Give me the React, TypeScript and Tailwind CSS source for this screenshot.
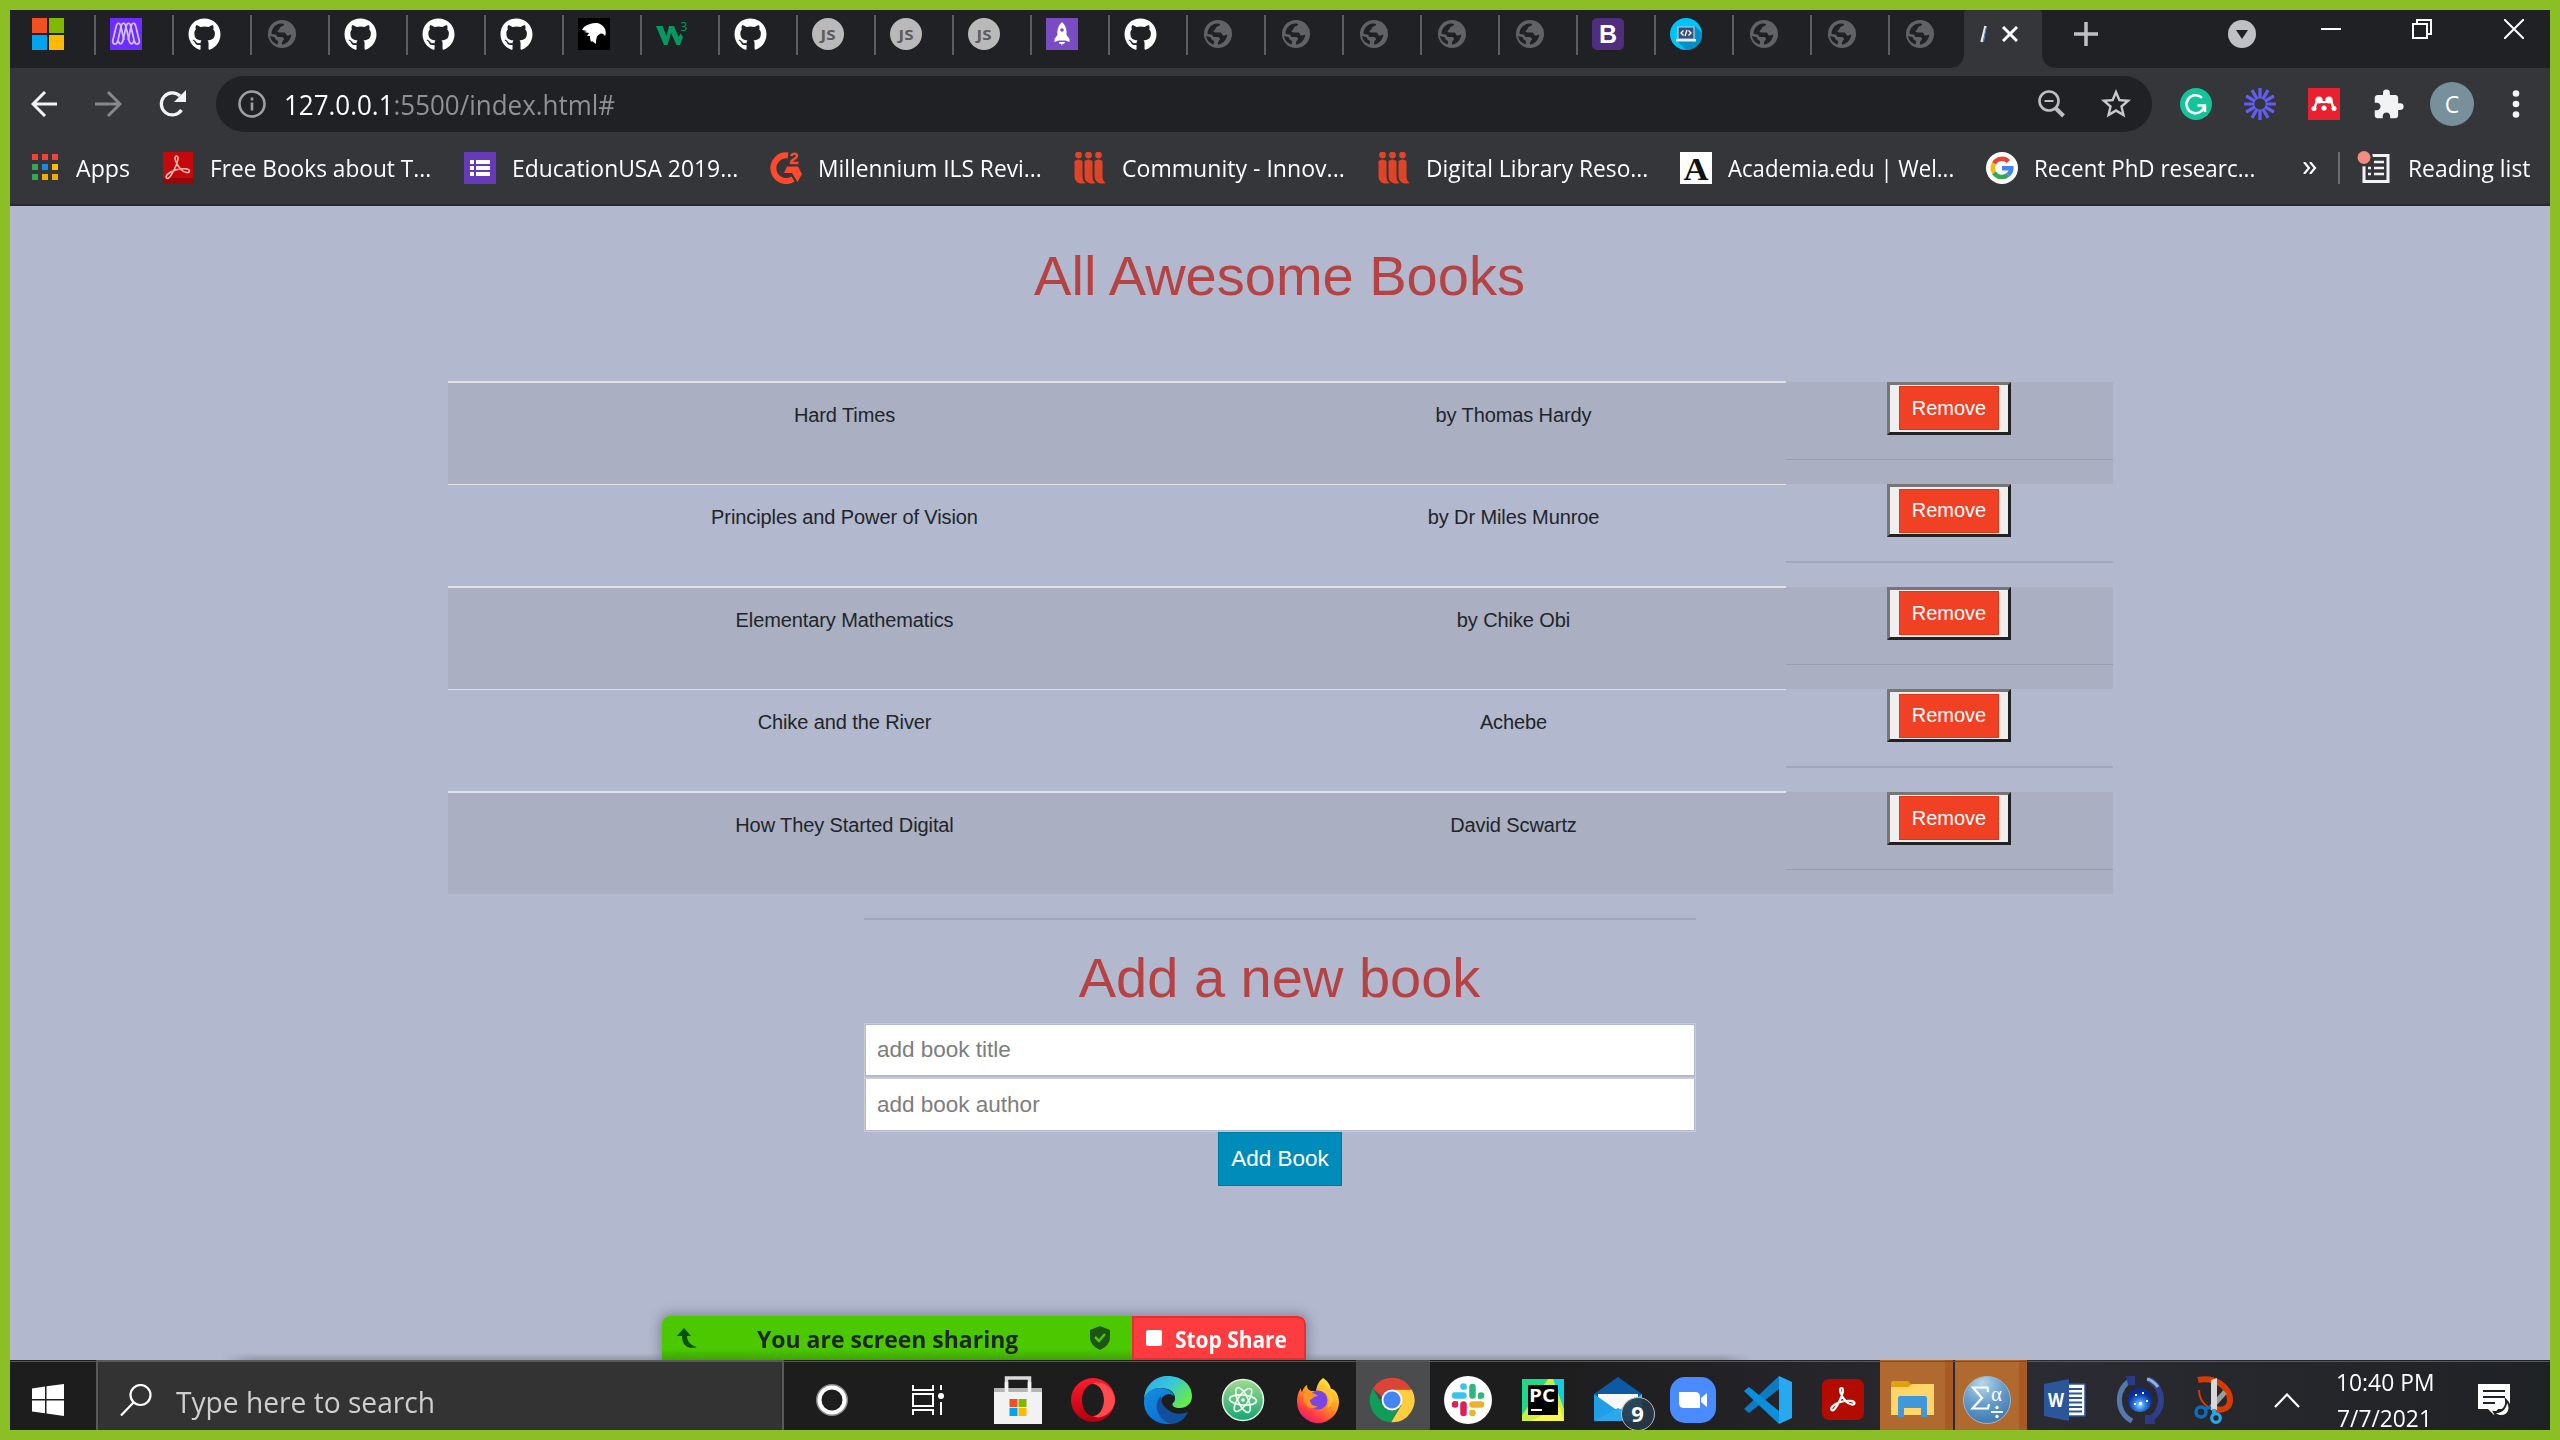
import React, { useLayoutEffect, useRef, useState } from "react";
import { FaGithub } from "react-icons/fa";
import { MdExtension, MdStarBorder } from "react-icons/md";

type Kids = { children?: React.ReactNode };

/* Single-line label condensed or widened to an exact width. */
function Fit({ w, className = "", children }: Kids & { w: number; className?: string }) {
  const ref = useRef<HTMLSpanElement>(null);
  const [scale, setScale] = useState(1);
  useLayoutEffect(() => {
    if (ref.current) setScale(w / ref.current.offsetWidth);
  }, [w]);
  return (
    <span className={"block shrink-0 whitespace-nowrap " + className} style={{ width: w }}>
      <span ref={ref} className="inline-block origin-left" style={{ transform: `scaleX(${scale})` }}>
        {children}
      </span>
    </span>
  );
}

function Svg({ size = 32, box = "0 0 32 32", children }: Kids & { size?: number; box?: string }) {
  return (
    <svg width={size} height={size} viewBox={box} fill="none" className="block shrink-0">
      {children}
    </svg>
  );
}

const Microsoft = () => (
  <Svg>
    <path fill="#f25022" d="M0 0h15v15H0z" />
    <path fill="#7fba00" d="M17 0h15v15H17z" />
    <path fill="#00a4ef" d="M0 17h15v15H0z" />
    <path fill="#ffb900" d="M17 17h15v15H17z" />
  </Svg>
);
const Microverse = () => (
  <Svg>
    <path fill="#6f2cff" d="M0 0h32v32H0z" />
    <g stroke="#d3c2ff" strokeWidth="1.700">
      <path d="M2.500 24C4 27 7 27 8 22l3-13c1-5 4-5 5 0l3 13c1 5 4 5 5 0" />
      <path d="M29.500 24C28 27 25 27 24 22L21 9c-1-5-4-5-5 0l-3 13c-1 5-4 5-5 0" />
      <path d="M2.500 24L6 9c1-5 4-5 5 0l3 13M29.500 24L26 9c-1-5-4-5-5 0l-3 13" />
    </g>
  </Svg>
);
const GitHub = () => <FaGithub size={33} color="#fff" className="shrink-0" />;
const Globe = () => (
  <Svg>
    <circle cx="16" cy="16" r="14" fill="#5f6368" />
    <path
      fill="#202124"
      d="M15 5.500c2.600 0 3.500.5 3 1.500-.5 1-2.500 1-3.500 2s-.5 2-2 3-1 2.500 1 2.500h4.500c2 0 1.500 2.500 3 3 2 .5 3-1 4.500-1-1 5-4 9.500-9.500 10 0-2 0-3.500 1.500-4.500 1.500-1 0-3-2-3h-3.500c-1.500 0-1-2-2.500-2.500L5.500 16c0-6 4-10 9.500-10.500zM4 18l4 1c1.500.5 1 2.500 2.500 3 1 .5 2 1 1.500 3l-.5 1.500C7.500 25 4.500 22 4 18z"
    />
  </Svg>
);
const Eagle = () => (
  <Svg>
    <path fill="#000" d="M0 0h32v32H0z" />
    <path fill="#fff" d="M4 12c2-4 5-5 8-6 6-2 12-1 15 5 1 3 1 5 0 7-1-2-3-3-5-2-3 1-4 4-4 10l-4-3-1 1c-1-3-1-4-1-6l-3 0 2-3-5-1 3-1z" />
  </Svg>
);
const W3 = () => (
  <Svg>
    <path fill="#059862" d="M0 8h6.500l4 10 2.500-10h5l4.500 11 2-3.500L27 19l-3 8h-3.500L15 15l-3.500 12H8z" />
    <text x="24.500" y="13" fontSize="12" fill="#059862" fontFamily="Open Sans, sans-serif">3</text>
  </Svg>
);
const Js = () => (
  <Svg>
    <circle cx="16" cy="16" r="16" fill="#b9b9b9" />
    <text x="16" y="21.500" fontSize="15" fontWeight="700" fill="#5c5c5c" textAnchor="middle" fontFamily="Open Sans, sans-serif" textLength="15" lengthAdjust="spacingAndGlyphs">JS</text>
  </Svg>
);
const Rocket = () => (
  <Svg>
    <path fill="#7b4bc4" d="M0 0h32v32H0z" />
    <path fill="#fff" d="M16 4c4 4 5 8 4.500 13l3 4v3l-4-1.500h-7L8.500 24v-3l3-4C11 12 12 8 16 4zM13 24h6l-1 2-1.500-.5L16 28l-1-2.500-1.500.5z" />
    <circle cx="16" cy="12" r="1.800" fill="#7b4bc4" />
  </Svg>
);
const Bootstrap = () => (
  <Svg>
    <rect width="32" height="32" rx="5" fill="#4f2f7d" />
    <text x="16" y="25" fontSize="25" fontWeight="700" fill="#fff" textAnchor="middle" fontFamily="Liberation Sans, sans-serif">B</text>
  </Svg>
);
const CodeLaptop = () => (
  <Svg>
    <circle cx="16" cy="16" r="16" fill="#00c3f7" />
    <path fill="#0390c8" d="M25 8l7 7c1 9-6 17-16 17l-9-9z" />
    <path fill="#35507a" stroke="#b9cfe0" strokeWidth="1.200" d="M8 9h16v12H8z" />
    <path fill="#e6eef5" d="M6 21h20v2.500H6z" />
    <path stroke="#fff" strokeWidth="1.300" d="M13.500 12.500L11 15l2.500 2.500M18.500 12.500L21 15l-2.500 2.500M17 12l-2 6" />
  </Svg>
);

const tabs = [
  Microsoft, Microverse, GitHub, Globe, GitHub, GitHub, GitHub, Eagle, W3, GitHub, Js, Js, Js, Rocket, GitHub,
  Globe, Globe, Globe, Globe, Globe, Bootstrap, CodeLaptop, Globe, Globe, Globe,
];

function TabStrip() {
  return (
    <div className="flex h-[58px] shrink-0 bg-[#202124] pl-[22px]">
      {tabs.map((Icon, i) => (
        <div key={i} className={i === tabs.length - 1 ? "flex w-[60px] shrink-0 pt-2" : "flex w-[78px] shrink-0 pt-2"}>
          <div className="w-[62px]"><Icon /></div>
          {i < tabs.length - 1 && <div className="-mt-[3px] h-10 w-[2px] bg-[#5b5d61]" />}
        </div>
      ))}
      <div className="relative flex w-[78px] shrink-0 items-center rounded-t-sm bg-[#35363a] pb-[10px] pl-4">
        <svg className="absolute bottom-0 -left-4" width="16" height="16"><path fill="#35363a" d="M16 0v16H0Q16 16 16 0z" /></svg>
        <svg className="absolute -right-4 bottom-0" width="16" height="16"><path fill="#35363a" d="M0 0v16h16Q0 16 0 0z" /></svg>
        <svg width="8" height="18" className="mr-[14px]"><path d="M1.500 17L5.500 1" stroke="#e8eaed" strokeWidth="2.500" /><path d="M3.500 17L6 3" stroke="#4f83c9" strokeWidth="1.200" /></svg>
        <svg width="16" height="16"><path d="M1 1l14 14M15 1L1 15" stroke="#fff" strokeWidth="3" /></svg>
      </div>
      <svg width="24" height="24" className="mt-3 ml-8 shrink-0"><path d="M12 0v24M0 12h24" stroke="#bdc0c5" strokeWidth="3.500" /></svg>
      <svg width="28" height="28" className="mt-[10px] ml-[130px] shrink-0"><circle cx="14" cy="14" r="14" fill="#bdc1c6" /><path d="M8 10h12l-6 9z" fill="#202124" /></svg>
      <svg width="20" height="20" className="mt-[9px] ml-[65px] shrink-0"><path d="M0 10h20" stroke="#fff" strokeWidth="2" /></svg>
      <svg width="20" height="20" className="mt-[9px] ml-[71px] shrink-0" fill="none" stroke="#fff" strokeWidth="2"><path d="M1 5h14v14H1zM5 5V1h14v14h-4" /></svg>
      <svg width="20" height="20" className="mt-[9px] ml-[72px] shrink-0"><path d="M0 0l20 20M20 0L0 20" stroke="#fff" strokeWidth="2" /></svg>
    </div>
  );
}

function Toolbar() {
  return (
    <div className="flex h-[72px] shrink-0 items-center bg-[#35363a] pl-[21px]">
      <svg width="27" height="26" fill="none" stroke="#f1f3f4" strokeWidth="3"><path d="M26 13H2M14 1L2 13l12 12" /></svg>
      <svg width="27" height="26" fill="none" stroke="#85878b" strokeWidth="3" className="ml-[37px]"><path d="M0 13h25M13 1l12 12-12 12" /></svg>
      <svg width="28" height="28" fill="none" className="ml-[36px]"><path d="M23.500 20A11 11 0 1 1 22 6" stroke="#f1f3f4" strokeWidth="3.200" /><path d="M28 0v12H16z" fill="#f1f3f4" /></svg>
      <div className="ml-[30px] flex h-14 w-[1936px] shrink-0 items-center rounded-full bg-[#202124] pl-[22px]">
        <svg width="28" height="28" fill="none" stroke="#9aa0a6" strokeWidth="2.600"><circle cx="14" cy="14" r="12.500" /><path d="M14 12.500v8M14 7.500v3" /></svg>
        <Fit w={331} className="mr-[2px] ml-[18px] text-[28px] text-[#8e9195]"><span className="text-white">127.0.0.1</span>:5500/index.html#</Fit>
        <div className="grow" />
        <svg width="28" height="28" fill="none" stroke="#bdbdbd" strokeWidth="2.600"><circle cx="12" cy="11" r="9.500" /><path d="M18.500 18l8 8" strokeWidth="4" /><path d="M7.500 11h9" strokeWidth="2" /></svg>
        <MdStarBorder size={36} color="#c7c8ca" className="mr-[18px] ml-[33px]" />
      </div>
      <div className="ml-7 flex items-center gap-8">
        <Svg>
          <circle cx="16" cy="16" r="16" fill="#15c39a" />
          <path d="M22 10a9 9 0 1 0 2.500 7M17.500 17.500H25V24" stroke="#fff" strokeWidth="2.500" />
        </Svg>
        <Svg>
          <g stroke="#625df5" strokeWidth="3.200">
            {[0, 30, 60, 90, 120, 150].map((a) => <path key={a} d="M16 0v10.500M16 21.500V32" transform={`rotate(${a} 16 16)`} />)}
          </g>
        </Svg>
        <Svg>
          <path fill="#e9202f" d="M0 0h32v32H0z" />
          <g fill="#fff"><circle cx="11" cy="12" r="3.600" /><circle cx="21" cy="12" r="3.600" /><circle cx="6" cy="20.500" r="2.500" /><circle cx="16" cy="20" r="2.600" /><circle cx="26" cy="20.500" r="2.500" /></g>
          <path d="M9 12c-1 3-1 6-3 8M12 13c2 1.500 6 1.500 8 0M23 12c1 3 1 6 3 8" stroke="#fff" strokeWidth="2.400" />
        </Svg>
        <MdExtension size={33} color="#f1f3f4" />
      </div>
      <div className="ml-[25px] flex size-11 shrink-0 items-center justify-center rounded-full bg-[#78909c] text-[23px] text-white">C</div>
      <svg width="8" height="28" className="ml-[38px]" fill="#f1f3f4"><circle cx="4" cy="3.500" r="3.300" /><circle cx="4" cy="14" r="3.300" /><circle cx="4" cy="24.500" r="3.300" /></svg>
    </div>
  );
}

const AppsGrid = () => (
  <svg width="28" height="28" className="shrink-0">
    {["#f44336", "#f44336", "#f44336", "#34a853", "#1e88e5", "#fbbc05", "#34a853", "#f5a80c", "#f5a80c"].map((c, i) => (
      <rect key={i} x={(i % 3) * 10} y={Math.floor(i / 3) * 10} width="6" height="6" fill={c} />
    ))}
  </svg>
);
const PdfMark = () => (
  <path d="M14.500 4C11 4 14 12 19 17.500c3.500 3.500 8.500 4 8.500 1.500s-7-3-14-1C7 20 3 23.500 4.500 26c2 2 5-3 8-9 3-6 5-13 2-13z" />
);
const AcrobatOld = () => (
  <Svg>
    <path fill="#c4090c" d="M1 0h30v32H1z" /><path fill="#7c0708" d="M1 26h30v6H1z" opacity=".6" />
    <g stroke="#f0b9b4" strokeWidth="1.600"><PdfMark /></g>
  </Svg>
);
const Forms = () => (
  <Svg>
    <rect width="32" height="32" rx="1" fill="#673ab7" />
    <path fill="#fff" d="M6 8h4v4H6zM12 8h14v4H12zM6 14h4v4H6zM12 14h14v4H12zM6 20h4v4H6zM12 20h14v4H12z" />
  </Svg>
);
const G2 = () => (
  <Svg>
    <path stroke="#ff492c" strokeWidth="6" d="M18 3.500A12.800 12.800 0 1 0 23 27" />
    <path fill="#ff492c" d="M17 14.500h11l4 7.500-4.500 8-5.500-9h-8z" />
    <path stroke="#ff492c" strokeWidth="2.500" d="M21 4c1.500-3 6-3 6 0s-6 3-6 7h7.500" />
  </Svg>
);
const Triple = () => (
  <Svg>
    {[0, 10, 20].map((x) => (
      <g key={x} transform={`translate(${x} 0)`} fill="#e04426">
        <circle cx="4.500" cy="3" r="3.400" />
        <path d="M.5 9Q4.500 6 8.500 9v15q0 5 3 7c-6 2-11-1-11-7z" />
      </g>
    ))}
  </Svg>
);
const Academia = () => (
  <Svg>
    <path fill="#fff" d="M0 0h32v32H0z" />
    <text x="16" y="28" fontSize="32" fontWeight="700" fill="#111" textAnchor="middle" fontFamily="Liberation Serif, serif" textLength="25" lengthAdjust="spacingAndGlyphs">A</text>
  </Svg>
);
const Google = () => (
  <Svg>
    <circle cx="16" cy="16" r="16" fill="#fff" />
    <g strokeWidth="4.500">
      <path stroke="#ea4335" d="M22.500 9.500A9.300 9.300 0 0 0 8 11.300" />
      <path stroke="#fbbc05" d="M8 11.300a9.300 9.300 0 0 0 0 9.400" />
      <path stroke="#34a853" d="M8 20.700a9.300 9.300 0 0 0 14 2" />
      <path stroke="#4285f4" d="M22 22.700c2.500-2 3.300-4 3.300-6.500H16" />
    </g>
  </Svg>
);

function Bookmark({ icon, text, w, cell }: { icon: React.ReactNode; text: string; w: number; cell: string }) {
  return (
    <div className={"flex shrink-0 items-center gap-4 " + cell}>
      {icon}
      <Fit w={w}>{text}</Fit>
    </div>
  );
}

function Bookmarks() {
  return (
    <div className="flex h-[66px] shrink-0 items-center border-b-2 border-[#28292b] bg-[#35363a] pb-2 pl-[22px] text-2xl text-white">
      <Bookmark icon={<AppsGrid />} text="Apps" w={54} cell="w-[130px]" />
      <Bookmark icon={<AcrobatOld />} text="Free Books about T..." w={221} cell="w-[302px]" />
      <Bookmark icon={<Forms />} text="EducationUSA 2019..." w={226} cell="w-[306px]" />
      <Bookmark icon={<G2 />} text="Millennium ILS Revi..." w={224} cell="w-[304px]" />
      <Bookmark icon={<Triple />} text="Community - Innov..." w={223} cell="w-[304px]" />
      <Bookmark icon={<Triple />} text="Digital Library Reso..." w={222} cell="w-[302px]" />
      <Bookmark icon={<Academia />} text="Academia.edu | Wel..." w={226} cell="w-[306px]" />
      <Bookmark icon={<Google />} text="Recent PhD researc..." w={221} cell="w-[317px]" />
      <svg width="14" height="12" className="shrink-0" fill="none" stroke="#fff" strokeWidth="2.200"><path d="M1 0l5 6-5 6M7 0l5 6-5 6" /></svg>
      <div className="ml-[21px] h-8 w-[2px] shrink-0 bg-[#6b6c70]" />
      <svg width="34" height="34" className="ml-[17px] shrink-0" fill="none">
        <path d="M7 4.500h24v26H7z" stroke="#f1f3f4" strokeWidth="3" />
        <path d="M11 11h3M11 17h3M11 23h3M17 11h10M17 17h10M17 23h10" stroke="#f1f3f4" strokeWidth="2.600" />
        <circle cx="7" cy="6.500" r="9" fill="#35363a" /><circle cx="7" cy="6.500" r="6.500" fill="#f28b82" />
      </svg>
      <Fit w={122} className="ml-[17px]">Reading list</Fit>
    </div>
  );
}

const books = [
  ["Hard Times", "by Thomas Hardy"],
  ["Principles and Power of Vision", "by Dr Miles Munroe"],
  ["Elementary Mathematics", "by Chike Obi"],
  ["Chike and the River", "Achebe"],
  ["How They Started Digital", "David Scwartz"],
];

function BookRow({ book, striped }: { book: string[]; striped: boolean }) {
  const cell = striped ? "-mt-px border-t-2 border-[#dee2e6] pt-[17px]" : "border-t border-[#dee2e6] pt-[17px]";
  return (
    <div className={striped ? "flex h-[102px] bg-[#aaafc1]" : "flex h-[103px]"}>
      <div className={"w-[793px] pl-px text-center leading-[30px] tracking-[-0.1px] " + cell}>{book[0]}</div>
      <div className={"w-[545px] pl-px text-center leading-[30px] tracking-[-0.1px] " + cell}>{book[1]}</div>
      <div className="flex w-[327px] flex-col items-center">
        <button className={"flex h-[53px] w-[124px] justify-center border-[3px] border-t-[#767676] border-r-[#222] border-b-[#222] border-l-[#767676] bg-[#efefef] " + (striped ? "pt-px" : "pt-[2px]")}>
          <span className={"block h-11 w-[100px] border border-[#ea3212] bg-[#f04124] text-white " + (striped ? "leading-[42px]" : "leading-[40px]")}>Remove</span>
        </button>
        <div className={striped ? "mt-6 h-px w-full bg-[#989db0]" : "mt-6 h-[2px] w-full bg-[#a2a7bb]"} />
      </div>
    </div>
  );
}

function Page() {
  return (
    <div className="flex h-[1154px] shrink-0 flex-col items-center bg-[#b2b8cd] pt-[38px] font-['Liberation_Sans',Arial,sans-serif] text-xl text-[#212529]">
      <h1 className="-ml-px text-[56px] leading-[64px] text-[#b64343]">All Awesome Books</h1>
      <div className="mt-[74px] w-[1665px]">
        {books.map((b, i) => <BookRow key={b[0]} book={b} striped={i % 2 === 0} />)}
      </div>
      <div className="mt-6 h-[2px] w-[832px] bg-[#a2a7bb]" />
      <h2 className="-ml-px mt-[26px] text-[56px] leading-[64px] text-[#b64343]">Add a new book</h2>
      <div className="mt-[13px] flex h-[54px] w-[832px] border border-b-0 border-[#ccc] px-px pt-px pb-[2px]">
        <input placeholder="add book title" className="w-full bg-white px-[11px] text-[22.5px] placeholder:text-[#7d7d7d]" />
      </div>
      <div className="flex h-[55px] w-[832px] border border-t-2 border-[#ccc] px-px pb-px">
        <input placeholder="add book author" className="w-full bg-white px-[11px] text-[22.5px] placeholder:text-[#7d7d7d]" />
      </div>
      <button className="h-[54px] w-[124px] border border-[#0079a1] bg-[#008cba] text-[22.5px] whitespace-nowrap text-white">Add Book</button>
    </div>
  );
}

function ShareBar() {
  return (
    <div className="absolute top-[1306px] left-[652px] flex h-11 w-[644px] overflow-hidden rounded-t-lg font-bold shadow-[0_0_12px_2px_rgba(50,55,75,0.4)] [clip-path:inset(-20px_-20px_0_-20px)]">
      <div className="flex w-[470px] items-center bg-linear-to-b from-[#4bc800] from-75% to-[#3da400] pl-[15px]">
        <svg width="20" height="20"><path fill="#0a5200" d="M7 0l7 8h-4c0 5 3 9 10 11-9 3-15-2-15-11H0z" /></svg>
        <Fit w={261} className="ml-[60px] pt-[3px] text-[23.500px] text-[#21262d]">You are screen sharing</Fit>
        <svg width="22" height="24" className="ml-[71px]"><path fill="#1d5514" d="M11 0l10 4v7c0 6-4 10-10 13C5 21 1 17 1 11V4z" /><path d="M6 11l4 4 6-7" fill="none" stroke="#4bc800" strokeWidth="2.500" /></svg>
      </div>
      <div className="flex grow items-center rounded-tr-lg border-2 border-[#e52f33] bg-[#fc3c3f] pl-3 text-white">
        <div className="size-4 rounded-[2px] bg-white" />
        <Fit w={112} className="ml-[13px] pt-[3px] text-[23.500px]">Stop Share</Fit>
      </div>
    </div>
  );
}

const Store = () => (
  <Svg size={48} box="0 0 48 48">
    <path d="M12.500 16V2h23v14" stroke="#dcdcdc" strokeWidth="3.500" />
    <path fill="#b5b5b5" d="M0 12h48v5H0z" /><path fill="#f2f2f2" d="M0 16h48v32H0z" /><path stroke="#f2f2f2" strokeWidth="3.500" d="M12.500 16V6M35.500 16V6" />
    <path fill="#f25022" d="M15.500 23h8v8h-8z" /><path fill="#7fba00" d="M24.500 23h8v8h-8z" /><path fill="#00a4ef" d="M15.500 32h8v8h-8z" /><path fill="#ffb900" d="M24.500 32h8v8h-8z" />
  </Svg>
);
const Opera = () => (
  <Svg size={48} box="0 0 48 48">
    <defs><linearGradient id="op" x1="0" y1="0" x2="0" y2="1"><stop stopColor="#ff1b2d" /><stop offset="1" stopColor="#b3000f" /></linearGradient></defs>
    <path fill="url(#op)" fillRule="evenodd" d="M24 2a22 22 0 1 0 0 44 22 22 0 1 0 0-44zm0 6c6 0 11 7 11 16s-5 16-11 16-11-7-11-16 5-16 11-16z" />
    <path fill="#ff4b4f" d="M24 8C32 3 46 12 46 24S32 45 24 40c6 0 11-7 11-16S30 8 24 8z" />
  </Svg>
);
const Edge = () => (
  <Svg size={48} box="0 0 48 48">
    <defs>
      <linearGradient id="e1" x1="0" y1="0" x2="1" y2=".6"><stop stopColor="#2fa8ea" /><stop offset=".5" stopColor="#35c5dc" /><stop offset="1" stopColor="#66eb4a" /></linearGradient>
      <linearGradient id="e2" x1="0" y1="0" x2=".6" y2="1"><stop stopColor="#1490df" /><stop offset="1" stopColor="#0b6fd0" /></linearGradient>
    </defs>
    <path fill="url(#e1)" d="M0 23C1 8 12 0 24 0c14 0 24 9 24 20 0 8-6 12-12 12-5 0-9-2-7-5 2-2 2-3 2-5 0-6-6-10-14-10C9 12 3 16 0 23z" />
    <path fill="url(#e2)" d="M0 24c2-8 8-12 15-12 8 0 14 3 15 8-4-3-10-2-12 2-5 9 0 20 10 26-2 0-3 0-4 0C10 48-1 38 0 24z" />
    <path fill="#124f9c" d="M17 20c-9 8-3 24 10 28 8 0 14-5 17-12-7 3-16 2-21-3-4-3-6-7-6-13z" />
  </Svg>
);
const Atom = () => (
  <Svg size={44} box="0 0 44 44">
    <defs><linearGradient id="at" x1="0" y1="0" x2="0" y2="1"><stop stopColor="#9fdb8d" /><stop offset="1" stopColor="#17a573" /></linearGradient></defs>
    <circle cx="22" cy="22" r="20.500" fill="url(#at)" stroke="#dff3e4" strokeWidth="1.500" />
    <g stroke="#f3fff3" strokeWidth="1.600">{[5, 65, 125].map((a) => <ellipse key={a} cx="22" cy="22" rx="13.500" ry="5" transform={`rotate(${a} 22 22)`} />)}</g>
    <circle cx="22" cy="22" r="1.800" fill="#fff" />
  </Svg>
);
const Firefox = () => (
  <Svg size={46} box="0 0 46 46">
    <defs>
      <linearGradient id="ff" x1=".8" y1="0" x2=".2" y2="1"><stop stopColor="#fff04a" /><stop offset=".45" stopColor="#ff9a1e" /><stop offset=".8" stopColor="#ff3647" /><stop offset="1" stopColor="#e31587" /></linearGradient>
    </defs>
    <path fill="url(#ff)" d="M28 1c5 3 7 7 8 11 3-1 8 5 8 13a21 21 0 0 1-42 0c0-7 2-11 4-14 0 2 0 3 1 4 1-3 3-6 5-7 0 3 1 5 4 6l5 0c1-6 3-10 7-13z" />
    <circle cx="23" cy="23" r="9.500" fill="#7a45e5" />
    <path fill="#ff9520" d="M8 18c5-3 10-3 15 1-5 0-5 3-8 4 0 4 4 7 8 6-6 5-15 1-15-11z" />
    <path fill="#ffc233" d="M23 13c7 0 11 5 11 11 0 3-1 5-2 7 9-5 8-18-5-20z" />
  </Svg>
);
const Chrome = () => (
  <Svg size={48} box="0 0 48 48">
    <path fill="#ffcd40" d="M24 13.500h19.800A22.300 22.300 0 0 1 23 46.300L33.500 29z" />
    <path fill="#db4437" d="M4.900 12.500a22.300 22.300 0 0 1 38.700 1H24a10.500 10.500 0 0 0-10 7z" />
    <path fill="#0f9d58" d="M4.900 12.500L14.900 29.500A10.500 10.500 0 0 0 31 32l-8 14.300A22.300 22.300 0 0 1 4.900 12.500z" />
    <circle cx="24" cy="24" r="10.500" fill="#f4f4f4" /><circle cx="24" cy="24" r="8.500" fill="#4285f4" />
  </Svg>
);
const Slack = () => (
  <Svg size={48} box="0 0 48 48">
    <circle cx="24" cy="24" r="24" fill="#fff" />
    <g strokeWidth="6.500" strokeLinecap="round">
      <path stroke="#36c5f0" d="M11 19.500h8.500M19.500 10.500v.1" /><path stroke="#2eb67d" d="M28.500 11v8.500M37 19.500h.1" />
      <path stroke="#ecb22e" d="M28.500 28.500H37M28.500 37v.1" /><path stroke="#e01e5a" d="M19.500 28.500V37M11 28.500h.1" />
    </g>
    <path fill="#36c5f0" d="M18 7.500v6h4.700v-3z" opacity=".9" /><path fill="#2eb67d" d="M34 18v4.700h3l2-3z" opacity=".9" />
    <path fill="#ecb22e" d="M25.300 34H30l1 3-3 2.500z" opacity=".9" /><path fill="#e01e5a" d="M9 25.300h5V29l-3 2z" opacity=".9" />
  </Svg>
);
const PyCharm = () => (
  <Svg size={42} box="0 0 42 42">
    <path fill="#21d789" d="M0 0h42v42H0z" /><path fill="#c9ef3f" d="M26 0h9l7 30v12H0V36z" /><path fill="#12cfe0" d="M31 0h11v30z" /><path fill="#f6f84e" d="M8 42l30-14 4 14z" />
    <path fill="#000" d="M6 6h30v30H6z" />
    <text x="7" y="22.500" fontSize="18" fontWeight="700" fill="#fff" fontFamily="Open Sans, sans-serif" textLength="26" lengthAdjust="spacingAndGlyphs">PC</text>
    <path fill="#fff" d="M9 30h11v2H9z" />
  </Svg>
);
const Mail = () => (
  <div className="relative">
    <Svg size={48} box="0 0 48 48">
      <path fill="#0c59a4" d="M0 18L24 1l24 17v2H0z" /><path fill="#f7f7f7" d="M4 18h40v8L24 38 4 26z" /><path fill="#1f9fe6" d="M0 18l24 17L0 45z" /><path fill="#2ba9ec" d="M0 45l24-13 24 13z" /><path fill="#31b9ef" d="M48 18L24 35l24 10z" />
    </Svg>
    <div className="absolute top-[21px] left-[27px] flex size-[34px] items-center justify-center rounded-full border border-[#b9bcc0] bg-[#263a48]/90 pb-px text-[22px] font-bold text-white">9</div>
  </div>
);
const Zoom = () => (
  <Svg size={46} box="0 0 46 46">
    <rect width="46" height="46" rx="15" fill="#4a8cff" /><path fill="#fff" d="M9 15h16q5 0 5 5v11H14q-5 0-5-5zM31 21l6-5v14l-6-5z" />
  </Svg>
);
const VsCode = () => (
  <Svg size={48} box="0 0 48 48">
    <path fill="#0e7ac4" d="M0 33l5 4L35 13V0z" /><path fill="#0b8fdc" d="M0 15l5-4 30 24v13z" /><path fill="#27a9f1" d="M35 0l13 6v36l-13 6z" />
  </Svg>
);
const Acrobat = () => (
  <Svg size={42} box="0 0 42 42">
    <rect width="42" height="41" rx="7" fill="#b30b00" />
    <g transform="translate(5 5)" stroke="#fff" strokeWidth="2.200"><PdfMark /></g>
  </Svg>
);
const Explorer = () => (
  <Svg size={44} box="0 0 44 44">
    <path fill="#e0a10c" d="M1 5q0-2 2-2h15l4 4v6H1z" /><path fill="#ffd667" d="M1 9h17l4-3h22v31H1z" /><path fill="#3f97dc" d="M8 20q0-2 2-2h25q2 0 2 2v19h-6v-9H14v9H8z" />
  </Svg>
);
const Sigma = () => (
  <Svg size={48} box="0 0 48 48">
    <defs><radialGradient id="sg" cx=".4" cy=".15" r=".9"><stop stopColor="#b9d7ea" /><stop offset=".5" stopColor="#659dcb" /><stop offset="1" stopColor="#3d76af" /></radialGradient></defs>
    <circle cx="24" cy="24" r="23.500" fill="url(#sg)" stroke="#9db9cc" />
    <path stroke="#fff" strokeWidth="2.200" d="M25 16l-.5-4.500H10l9 10.500-9.500 10.500H25l1-4.500" />
    <text x="28" y="25" fontSize="21" fill="#fff" fontFamily="Liberation Serif, serif">α</text>
    <path stroke="#fff" strokeWidth="1.800" d="M28 36h12" /><circle cx="34" cy="31.500" r="1.700" fill="#fff" /><circle cx="34" cy="40.500" r="1.700" fill="#fff" />
  </Svg>
);
const Word = () => (
  <Svg size={42} box="0 0 42 42">
    <path fill="#fff" stroke="#2b579a" strokeWidth="1.500" d="M22 5h19v32H22z" /><path stroke="#2b579a" strokeWidth="2" d="M25 10h13M25 14.500h13M25 19h13M25 23.500h13M25 28h13M25 32.500h13" /><path fill="#2b579a" d="M0 5l25-5v42L0 37z" />
    <text x="12" y="28" fontSize="20" fontWeight="700" fill="#fff" textAnchor="middle" fontFamily="Open Sans, sans-serif" textLength="16" lengthAdjust="spacingAndGlyphs">W</text>
  </Svg>
);
const Orbit = () => (
  <Svg size={48} box="0 0 48 48">
    <defs><radialGradient id="ob" cx=".5" cy=".7"><stop stopColor="#8fe0ff" /><stop offset=".5" stopColor="#2b78e0" /><stop offset="1" stopColor="#0a2d9c" /></radialGradient></defs>
    <path stroke="#5679ac" strokeWidth="5" d="M17 4C0 9-2 36 16 45" /><path stroke="#2f3f8d" strokeWidth="6" d="M31 44C49 38 50 12 32 3" />
    <path stroke="#8fb0d8" strokeWidth="3" d="M31 3c5 1 8 4 11 8" /><path fill="#2c3a86" d="M10 0h9v9l-7 0zM29 39h9l1 9h-10z" />
    <circle cx="24" cy="24" r="12" fill="url(#ob)" /><path fill="#eefaff" d="M19 18h2v2h-2zM26 16h2v2h-2zM23 26h3v3h-3zM30 24h2v2h-2zM18 27h2v2h-2z" />
  </Svg>
);
const Snip = () => (
  <Svg size={48} box="0 0 48 48">
    <path stroke="#d83b01" strokeWidth="6" d="M7 4c18-4 32 8 32 20 0 8-7 11-14 9" /><path stroke="#d83b01" strokeWidth="2" d="M8 14c0 8 3 13 9 17" />
    <path stroke="#9b9b9b" strokeWidth="5" d="M34 16L19 33" /><path fill="#d8d8d8" d="M20 4l6-2v32h-6z" />
    <circle cx="10" cy="36" r="5" stroke="#0f6cbd" strokeWidth="3.500" /><circle cx="25" cy="42" r="4.300" stroke="#28a8ea" strokeWidth="3.200" /><path stroke="#0f6cbd" strokeWidth="3" d="M14 33l6-2" /><path stroke="#28a8ea" strokeWidth="4" d="M23 37v-4" />
  </Svg>
);

function Slot({ children, tone = "" }: Kids & { tone?: string }) {
  return <div className={"flex w-[75px] shrink-0 items-center justify-center pt-[10px] " + tone}>{children}</div>;
}

function Taskbar() {
  return (
    <div className="relative flex h-[70px] shrink-0 bg-linear-to-r from-[#1d1d1e] from-60% via-[#2b2b33] via-80% to-[#1f2224]">
      <div className="absolute -top-[7px] left-[212px] h-[7px] w-[1530px] bg-linear-to-b from-transparent to-[#9398ab] mask-x-from-98% mask-x-to-100%" />
      <div className="absolute top-px left-0 h-px w-full bg-[#57585a]" />
      <div className="flex w-[86px] items-center pt-[10px] pl-[22px]">
        <svg width="32" height="32" fill="#fff"><path d="M0 4.500l13-2V15H0zM14.500 2.300L32 0v15H14.500zM0 16.500h13v12.800L0 27.500zM14.500 16.500H32V32l-17.500-2.500z" /></svg>
      </div>
      <div className="flex w-[688px] items-center border-x-2 border-t-2 border-[#58595a] bg-[#333] pt-2 pl-[22px]">
        <svg width="32" height="32" fill="none" stroke="#fff" strokeWidth="2.200"><circle cx="20.500" cy="11" r="10" /><path d="M13.500 18.500L1 31.500" /></svg>
        <Fit w={259} className="ml-6 pt-[3px] text-[30px] text-[#cfcfcf]">Type here to search</Fit>
      </div>
      <div className="flex w-24 items-center justify-center pt-[10px]">
        <svg width="32" height="32" fill="none"><circle cx="16" cy="16" r="14" stroke="#8c8d8e" strokeWidth="4" /><circle cx="16" cy="16" r="12.500" stroke="#fff" strokeWidth="4" /></svg>
      </div>
      <div className="flex w-24 items-center justify-center pt-[10px]">
        <svg width="32" height="30" fill="none" stroke="#fff" strokeWidth="2"><path d="M1 0v5h20V0M1 9h20v12H1zM1 30v-5h20v5M29 0v5M29 17v13" /><circle cx="29" cy="11" r="3" fill="#fff" stroke="none" /></svg>
      </div>
      <div className="flex pl-1">
        <Slot><Store /></Slot>
        <Slot><Opera /></Slot>
        <Slot><Edge /></Slot>
        <Slot><Atom /></Slot>
        <Slot><Firefox /></Slot>
        <Slot tone="border-l border-[#1d1d1e] bg-[#4b4c4e] pr-[2px]"><Chrome /></Slot>
        <Slot><Slack /></Slot>
        <Slot><PyCharm /></Slot>
        <Slot><Mail /></Slot>
        <Slot><Zoom /></Slot>
        <Slot><VsCode /></Slot>
        <Slot><Acrobat /></Slot>
        <div className="mr-[2px] flex w-[73px] shrink-0 items-center border-r-8 border-[#a65a24] bg-[#b0692f] pt-[10px] pl-[10px]"><Explorer /></div>
        <div className="flex w-[72px] shrink-0 items-center border-r-8 border-[#a65a24] bg-[#b0692f] pt-[10px] pl-2"><Sigma /></div>
        <Slot><Word /></Slot>
        <Slot><Orbit /></Slot>
        <Slot><Snip /></Slot>
      </div>
      <svg width="26" height="15" className="mt-[33px] ml-[22px] shrink-0" fill="none" stroke="#fff" strokeWidth="2.200"><path d="M1 14L13 1.500 25 14" /></svg>
      <div className="ml-[36px] flex h-[70px] w-[100px] shrink-0 flex-col overflow-hidden pt-1 text-2xl leading-[36px] text-white">
        <Fit w={98}>10:40 PM</Fit>
        <Fit w={95} className="pl-px">7/7/2021</Fit>
      </div>
      <svg width="34" height="34" className="mt-6 ml-[42px] shrink-0" fill="none">
        <path fill="#fff" d="M0 0h32v25H20l-4 6-6-6H0z" /><path stroke="#1f2224" strokeWidth="2.200" d="M5 7h22M5 13h22M5 19h12" />
        <path fill="#fff" stroke="#1f2224" strokeWidth="2" d="M28 16c6 6 4 16-5 16-3 0-6-2-7-4 8 1 13-5 12-12z" />
      </svg>
    </div>
  );
}

export default function App() {
  return (
    <div className="relative flex h-[1440px] w-[2560px] flex-col overflow-hidden border-[10px] border-[#8cbf26] bg-[#b2b8cd] font-['Open_Sans','Noto_Sans',sans-serif]">
      <TabStrip />
      <Toolbar />
      <Bookmarks />
      <Page />
      <Taskbar />
      <ShareBar />
    </div>
  );
}
